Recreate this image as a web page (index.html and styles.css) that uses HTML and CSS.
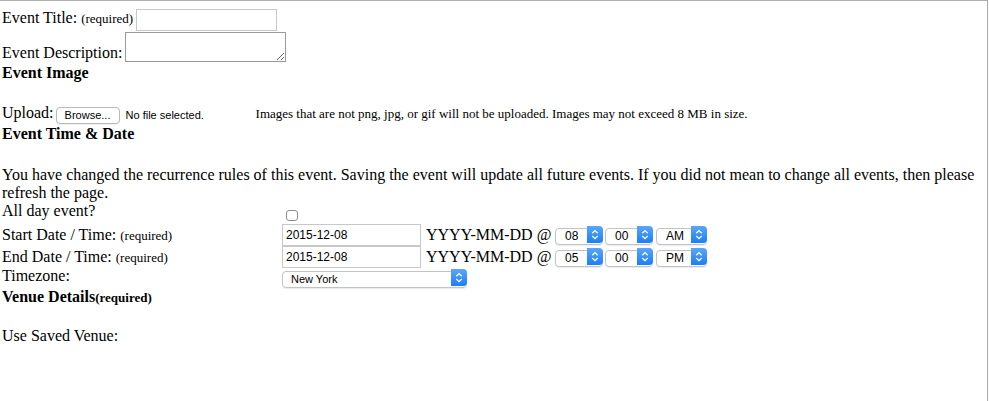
FILE: index.html
```html
<!DOCTYPE html>
<html>
<head>
<meta charset="utf-8">
<link rel="stylesheet" href="styles.css">
</head>
<body>
<div class="page">
  <div class="row r-title">
    <span class="lbl">Event Title: <small class="req">(required)</small></span>
    <input class="text title-input" type="text">
  </div>
  <div class="row r-desc">
    <span class="lbl desc-lbl">Event Description:</span>
    <textarea class="desc"></textarea>
  </div>
  <div class="head">Event Image</div>
  <div class="row r-upload">
    <span class="lbl up-lbl">Upload:</span>
    <span class="file"><button class="browse" type="button">Browse...</button><span class="nofile">No file selected.</span></span>
    <span class="note">Images that are not png, jpg, or gif will not be uploaded. Images may not exceed 8 MB in size.</span>
  </div>
  <div class="head">Event Time &amp; Date</div>
  <p class="warn">You have changed the recurrence rules of this event. Saving the event will update all future events. If you did not mean to change all events, then please refresh the page.</p>
  <div class="grid">
    <div class="cell"><span class="lbl">All day event?</span></div>
    <div class="cell"><input class="check" type="checkbox"></div>

    <div class="cell"><span class="lbl lbl-date">Start Date / Time: <small class="req">(required)</small></span></div>
    <div class="cell field">
      <input class="text date" type="text" value="2015-12-08">
      <span class="fmt">YYYY-MM-DD @</span>
      <span class="sel s-num"><select><option>08</option></select><span class="arrow"><svg width="16" height="17" viewBox="0 0 16 17"><path d="M5.3 7.2 8 4.6 10.7 7.2M5.3 10 8 12.6 10.7 10" fill="none" stroke="#fff" stroke-width="1.3"/></svg></span></span>
      <span class="sel s-num"><select><option>00</option></select><span class="arrow"><svg width="16" height="17" viewBox="0 0 16 17"><path d="M5.3 7.2 8 4.6 10.7 7.2M5.3 10 8 12.6 10.7 10" fill="none" stroke="#fff" stroke-width="1.3"/></svg></span></span>
      <span class="sel s-ampm"><select><option>AM</option></select><span class="arrow"><svg width="16" height="17" viewBox="0 0 16 17"><path d="M5.3 7.2 8 4.6 10.7 7.2M5.3 10 8 12.6 10.7 10" fill="none" stroke="#fff" stroke-width="1.3"/></svg></span></span>
    </div>

    <div class="cell"><span class="lbl lbl-date">End Date / Time: <small class="req">(required)</small></span></div>
    <div class="cell field">
      <input class="text date" type="text" value="2015-12-08">
      <span class="fmt">YYYY-MM-DD @</span>
      <span class="sel s-num"><select><option>05</option></select><span class="arrow"><svg width="16" height="17" viewBox="0 0 16 17"><path d="M5.3 7.2 8 4.6 10.7 7.2M5.3 10 8 12.6 10.7 10" fill="none" stroke="#fff" stroke-width="1.3"/></svg></span></span>
      <span class="sel s-num"><select><option>00</option></select><span class="arrow"><svg width="16" height="17" viewBox="0 0 16 17"><path d="M5.3 7.2 8 4.6 10.7 7.2M5.3 10 8 12.6 10.7 10" fill="none" stroke="#fff" stroke-width="1.3"/></svg></span></span>
      <span class="sel s-ampm"><select><option>PM</option></select><span class="arrow"><svg width="16" height="17" viewBox="0 0 16 17"><path d="M5.3 7.2 8 4.6 10.7 7.2M5.3 10 8 12.6 10.7 10" fill="none" stroke="#fff" stroke-width="1.3"/></svg></span></span>
    </div>

    <div class="cell"><span class="lbl lbl-tz">Timezone:</span></div>
    <div class="cell">
      <span class="sel s-tz"><select><option>New York</option></select><span class="arrow"><svg width="16" height="17" viewBox="0 0 16 17"><path d="M5.3 7.2 8 4.6 10.7 7.2M5.3 10 8 12.6 10.7 10" fill="none" stroke="#fff" stroke-width="1.3"/></svg></span></span>
    </div>
  </div>
  <div class="head">Venue Details<span class="req-b">(required)</span></div>
  <div class="saved">Use Saved Venue:</div>
</div>
</body>
</html>
```

FILE: styles.css
```css
html, body {
  margin: 0;
  padding: 0;
  background: #fff;
}

.page {
  box-sizing: border-box;
  width: 988px;
  height: 401px;
  border-top: 1px solid #b0b0b0;
  border-right: 1px solid #a9a9a9;
  padding: 8px 0 0 2px;
  font-family: "Liberation Serif", "Times New Roman", serif;
  font-size: 16px;
  line-height: 18px;
  color: #000;
}

.row {
  display: flex;
  align-items: flex-start;
}

.lbl {
  white-space: nowrap;
}

.req {
  font-size: 13px;
}

.r-title {
  height: 22px;
}

.text {
  box-sizing: border-box;
  border: 1px solid #c8c8c8;
  background: #fff;
  margin: 0;
  padding: 0 2px;
  font-family: "Liberation Sans", Arial, sans-serif;
  font-size: 12px;
  color: #000;
  outline: none;
}

.title-input {
  width: 141px;
  height: 22px;
  margin: 0 0 0 3px;
}

.r-desc {
  height: 33px;
}

.desc-lbl {
  margin-top: 13px;
}

.desc {
  box-sizing: border-box;
  width: 161px;
  height: 30px;
  margin: 1px 0 0 3px;
  padding: 2px;
  border: 1px solid #9a9a9a;
  font-family: "Liberation Sans", Arial, sans-serif;
  font-size: 11px;
  resize: both;
  outline: none;
}

.head {
  font-weight: bold;
  height: 18px;
}

.req-b {
  font-size: 13px;
}

.r-upload {
  height: 26px;
  margin-top: 17px;
}

.up-lbl {
  margin-top: 5px;
}

.file {
  display: flex;
  align-items: flex-start;
  width: 196px;
  margin-left: 2px;
}

.browse {
  box-sizing: border-box;
  width: 64px;
  height: 17px;
  margin: 8px 0 0 0;
  padding: 0;
  border: 1px solid #b9b9b9;
  border-radius: 4px;
  background: #fff;
  box-shadow: 0 1px 0 rgba(0, 0, 0, 0.06);
  font-family: "Liberation Sans", Arial, sans-serif;
  font-size: 11px;
  line-height: 15px;
  color: #000;
}

.nofile {
  margin: 7px 0 0 6px;
  font-family: "Liberation Sans", Arial, sans-serif;
  font-size: 11px;
  white-space: nowrap;
}

.note {
  margin: 6px 0 0 4px;
  font-size: 13px;
  white-space: nowrap;
}

.warn {
  margin: 23px 0 0 0;
  padding-right: 2px;
}

.grid {
  display: grid;
  grid-template-columns: 280px 1fr;
  grid-template-rows: 22px 22px 22px 19.5px;
}

.cell {
  display: flex;
  align-items: flex-start;
}

.check {
  appearance: none;
  -webkit-appearance: none;
  box-sizing: border-box;
  width: 12px;
  height: 11px;
  margin: 8px 0 0 4px;
  border: 1px solid #8e8e8e;
  border-radius: 3px;
  background: #fff;
}

.lbl-date {
  margin-top: 2px;
}

.lbl-tz {
  margin-top: -1px;
}

.date {
  width: 139px;
  height: 22px;
  padding-left: 3px;
}

.fmt {
  width: 129px;
  margin: 2px 0 0 5px;
  white-space: nowrap;
}

.sel {
  position: relative;
  display: inline-block;
  height: 17px;
  margin-top: 2px;
}

.sel select {
  appearance: none;
  -webkit-appearance: none;
  box-sizing: border-box;
  width: 100%;
  height: 17px;
  margin: 0;
  padding: 0 0 0 9px;
  border: 1px solid #c3c3c3;
  border-radius: 4px;
  background: #fff;
  box-shadow: 0 1px 1px rgba(0, 0, 0, 0.08);
  font-family: "Liberation Sans", Arial, sans-serif;
  font-size: 12px;
  line-height: 15px;
  color: #000;
  outline: none;
}

.arrow {
  position: absolute;
  top: 0;
  right: 0;
  width: 16px;
  height: 17px;
  border-radius: 0 4px 4px 0;
  background: linear-gradient(#5aa6fb, #1c7ef5);
  pointer-events: none;
}

.arrow svg {
  display: block;
}

.s-num {
  width: 48px;
  margin-right: 2px;
}

.s-ampm {
  width: 51px;
  margin-left: 1px;
}

.s-tz {
  width: 185px;
  margin-top: 1px;
}

.s-tz select {
  font-size: 11px;
  padding-left: 8px;
}

.saved {
  margin-top: 21.5px;
}
```
